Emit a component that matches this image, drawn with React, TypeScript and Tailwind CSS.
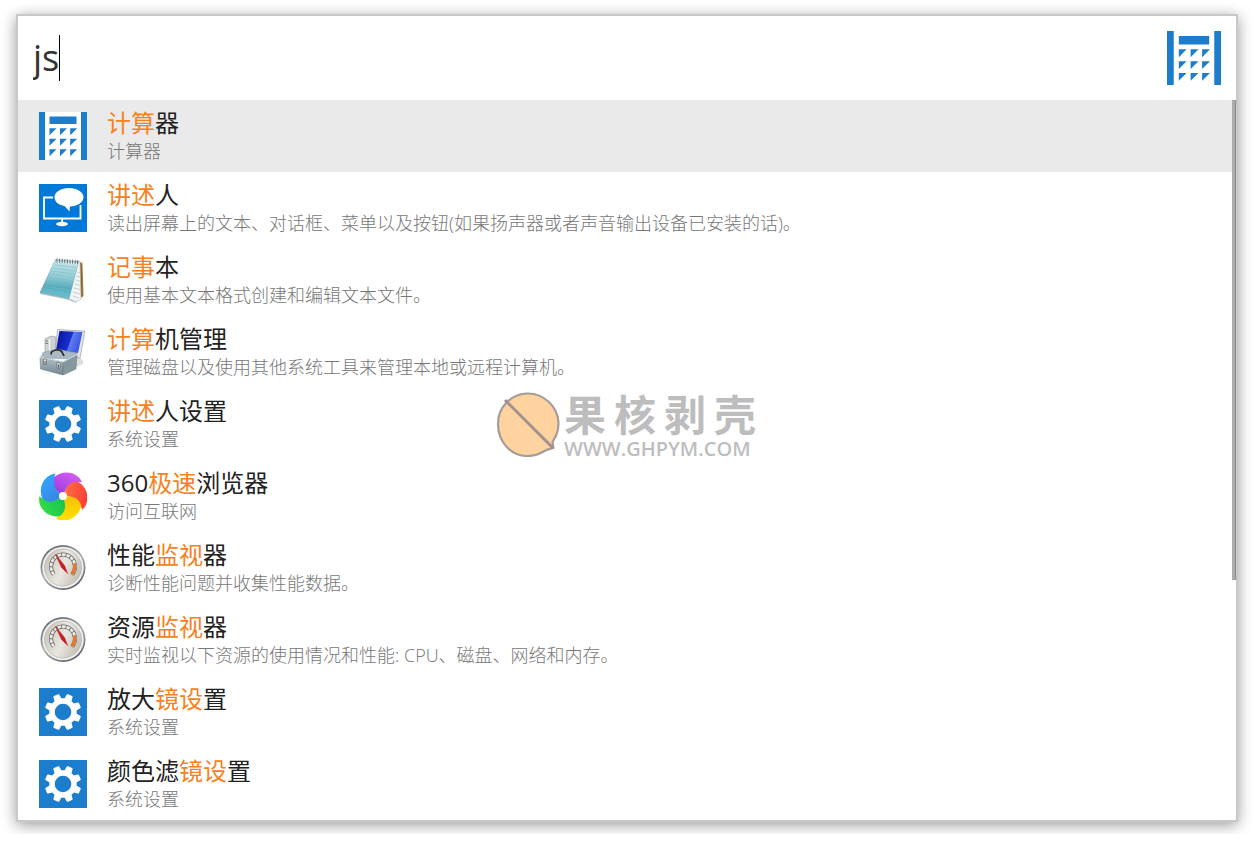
import { useState } from "react";
import type { ReactNode } from "react";

function CalculatorIcon({ className }: { className: string }) {
  return (
    <svg viewBox="0 0 48 48" className={className} aria-hidden="true">
      <rect width="48" height="48" fill="#fff" />
      <path
        fill="#1d7dcd"
        d="M0 0h6v48H0zM42 0h6v48h-6zM10.500 4.500h27V12h-27zM10.500 16.300h7l-7 7zM21 16.300h7l-7 7zM31.200 16.300h7l-7 7zM10.500 26.800h7l-7 7zM21 26.800h7l-7 7zM31.200 26.800h7l-7 7zM10.500 37.300h7l-7 7zM21 37.300h7l-7 7zM31.200 37.300h7l-7 7z"
      />
    </svg>
  );
}

function NarratorIcon() {
  return (
    <svg viewBox="0 0 48 48" className="size-12" aria-hidden="true">
      <rect width="48" height="48" fill="#0078d7" />
      <path d="M14 13.500H5v21h36.500V21" fill="none" stroke="#fff" strokeWidth="1.800" />
      <path d="M22.300 34h1.800v5h-1.800z" fill="#fff" />
      <ellipse cx="23" cy="40" rx="6" ry="2.200" fill="#fff" />
      <path
        d="M30 4c8 0 14.500 4 14.500 9.200 0 5.100-6 9-13.600 9.200L30.500 27.500 25.500 22C19.500 21 15.500 17.500 15.500 13.200 15.500 8 22 4 30 4z"
        fill="#fff"
      />
    </svg>
  );
}

function NotepadIcon() {
  return (
    <svg viewBox="0 0 48 48" className="size-12" aria-hidden="true">
      <defs>
        <linearGradient id="page" x1="0.500" y1="0" x2="0.400" y2="1">
          <stop offset="0" stopColor="#c9e6ea" />
          <stop offset="0.450" stopColor="#8fcbd5" />
          <stop offset="0.700" stopColor="#55abbd" />
          <stop offset="1" stopColor="#6cc4d3" />
        </linearGradient>
      </defs>
      <path d="M39 5l4.500 2 1 33-6 4z" fill="#a98236" />
      <path d="M42 8l1 33" stroke="#76551b" strokeWidth="0.800" />
      <path d="M37 5l4 1 1 37-4.500 3L24 41z" fill="#f1f4f5" stroke="#a3b0b4" strokeWidth="0.500" />
      <path
        d="M38 16l3 1M37 20l4 1M37 24l4 1M36 28l5 1.500M35 32l6 1.500M34 36l7 2M34 40l6 2"
        stroke="#a9bbc2"
        strokeWidth="0.600"
      />
      <path d="M1 36.500l28 5.500 9 4-1 .5-11-3.500L1 38z" fill="#b5c2c7" />
      <path d="M16.500 3.500L39.500 6 30 42.500 1 36.500z" fill="url(#page)" stroke="#6a9ca6" strokeWidth="0.500" />
      <path
        d="M16 9l21 2.500M14.500 12l21.500 3M13 15l22 3M11.500 18L34 21.500M10 21l23.500 4M8.500 24l24 4M7 27l25 4M5.500 30l25.500 4.500M4 33l26 5"
        stroke="#79bac7"
        strokeWidth="0.500"
      />
      <path d="M17 5.500L40 8" stroke="#eef2f2" strokeWidth="1.200" />
      <path
        d="M18 6.500v-4m2.600 4.200v-4m2.600 4.200v-4m2.600 4.200v-4m2.600 4.200v-4m2.600 4.200v-4m2.600 4.200v-4m2.600 4.200v-4m2.400 4.200v-4"
        stroke="#626b6e"
        strokeWidth="1"
      />
    </svg>
  );
}

function ToolboxIcon() {
  return (
    <svg viewBox="0 0 48 48" className="size-12" aria-hidden="true">
      <defs>
        <linearGradient id="screen" x1="0" y1="0.300" x2="1" y2="0.600">
          <stop offset="0" stopColor="#0614a0" />
          <stop offset="0.520" stopColor="#1a2fcf" />
          <stop offset="0.560" stopColor="#5f7cf0" />
          <stop offset="1" stopColor="#2f4fe6" />
        </linearGradient>
        <linearGradient id="box" x1="0" y1="0" x2="0" y2="1">
          <stop offset="0" stopColor="#b4c3cc" />
          <stop offset="1" stopColor="#72858f" />
        </linearGradient>
      </defs>
      <path d="M32 28l10 2 3 5-7 4-6-4z" fill="#dcdedf" />
      <path d="M6 11l6-3 5 1v18l-6 2-5-2z" fill="#cfd2d3" stroke="#7e8488" strokeWidth="0.500" />
      <path d="M10.500 11v17" stroke="#f5f6f6" strokeWidth="1.200" />
      <path d="M6.500 13h2.500M6.500 15.500h2.500" stroke="#4c555a" strokeWidth="0.700" />
      <path d="M18.500 1.500L46 3l-5 27-25-3z" fill="#e2e4e5" stroke="#8f9498" strokeWidth="0.600" />
      <path d="M20.500 3l23 1-4.500 21-22-3z" fill="url(#screen)" />
      <path d="M4 24.500L19 21l19 4.500-2 5.500L2 30z" fill="#aab9c2" stroke="#7d8d97" strokeWidth="0.500" />
      <path d="M1 29l23 5v13L1.500 41z" fill="url(#box)" stroke="#687a85" strokeWidth="0.500" />
      <path d="M24 34l14-7-1 14-13 6z" fill="#85979f" stroke="#667781" strokeWidth="0.500" />
      <path d="M1 29l23 5 14-7.500" fill="none" stroke="#d6dfe4" strokeWidth="1" />
      <path d="M12 26.500c0-3 2-4 5-4.500 3-.5 5 0 6 2 .5 1.500 1.500 2.500 2 4" fill="none" stroke="#2b2e30" strokeWidth="1.700" />
      <path d="M4.500 31h3v5.500h-3zM18 34.500h3v5.500h-3z" fill="#e5e9eb" stroke="#4d5558" strokeWidth="0.600" />
      <path d="M6 33v3M19.500 36.500v3" stroke="#5c4a38" strokeWidth="1" />
    </svg>
  );
}

const GEAR_TEETH = [22.5, 67.5, 112.5, 157.5, 202.5, 247.5, 292.5, 337.5];

function GearIcon() {
  return (
    <svg viewBox="0 0 48 48" className="size-12" aria-hidden="true">
      <rect width="48" height="48" fill="#1d7dcd" />
      <circle cx="24" cy="24" r="11" fill="none" stroke="#fff" strokeWidth="5.400" />
      {GEAR_TEETH.map((angle) => (
        <path
          key={angle}
          transform={`rotate(${angle} 24 24)`}
          d="M20 13l.8-6.300q.2-.9 1-.9h4.400q.8 0 1 .9L28 13z"
          fill="#fff"
        />
      ))}
    </svg>
  );
}

const BLADES = [
  { angle: 0, id: "blade-purple", from: "#8f37e0", to: "#d75cf2" },
  { angle: 72, id: "blade-red", from: "#ff7a45", to: "#fb3a36" },
  { angle: 144, id: "blade-yellow", from: "#f3b800", to: "#ffe300" },
  { angle: 216, id: "blade-green", from: "#0fbf55", to: "#33dd44" },
  { angle: 288, id: "blade-blue", from: "#3b7ce0", to: "#33a5f8" },
];

function BrowserIcon() {
  return (
    <svg viewBox="0 0 48 48" className="size-12" aria-hidden="true">
      <defs>
        {BLADES.map((blade) => (
          <linearGradient key={blade.id} id={blade.id} x1="0" y1="1" x2="0.700" y2="0">
            <stop offset="0" stopColor={blade.from} />
            <stop offset="1" stopColor={blade.to} />
          </linearGradient>
        ))}
      </defs>
      {BLADES.map((blade) => (
        <path
          key={blade.id}
          transform={`rotate(${blade.angle} 24 24)`}
          d="M24 24C14.500 17.700 12.500 11.500 15 5.500C23-2.500 38-1 43 10C34 9.500 27 13 24 24z"
          fill={`url(#${blade.id})`}
        />
      ))}
      <circle cx="24" cy="24" r="4" fill="#fff" />
    </svg>
  );
}

function GaugeIcon() {
  return (
    <svg viewBox="0 0 48 48" className="size-12" aria-hidden="true">
      <defs>
        <linearGradient id="rim" x1="0.200" y1="0" x2="0.800" y2="1">
          <stop offset="0" stopColor="#5a6368" />
          <stop offset="0.500" stopColor="#a9adaf" />
          <stop offset="1" stopColor="#4f575c" />
        </linearGradient>
        <linearGradient id="face" x1="0" y1="0.300" x2="1" y2="0.700">
          <stop offset="0" stopColor="#c8c4bd" />
          <stop offset="0.500" stopColor="#e9e6df" />
          <stop offset="1" stopColor="#c1bcb3" />
        </linearGradient>
      </defs>
      <circle cx="24" cy="23.500" r="22.500" fill="url(#rim)" />
      <circle cx="24" cy="23.500" r="20.800" fill="#ededec" />
      <circle cx="24" cy="23.500" r="18.500" fill="url(#face)" stroke="#b2b0ab" strokeWidth="0.600" />
      <path d="M15 30.500A12 12 0 1 1 33 30.500" fill="none" stroke="#5e6265" strokeWidth="4" />
      <path d="M15 30.500A12 12 0 1 1 33 30.500" fill="none" stroke="#eeeae2" strokeWidth="2.800" strokeDasharray="3.600 .8" />
      <path d="M35.500 19.500a12 12 0 0 1-3 11" fill="none" stroke="#e5792a" strokeWidth="3" />
      <path d="M16.500 10.500L25.500 21.500l3 8-6-6z" fill="#bf1f22" stroke="#c92427" strokeWidth="0.600" />
    </svg>
  );
}

type Segment = { text: string; match?: boolean };

type Result = {
  id: string;
  icon: ReactNode;
  title: Segment[];
  description: string;
};

const RESULTS: Result[] = [
  {
    id: "calculator",
    icon: <CalculatorIcon className="size-12" />,
    title: [{ text: "计算", match: true }, { text: "器" }],
    description: "计算器",
  },
  {
    id: "narrator",
    icon: <NarratorIcon />,
    title: [{ text: "讲述", match: true }, { text: "人" }],
    description: "读出屏幕上的文本、对话框、菜单以及按钮(如果扬声器或者声音输出设备已安装的话)。",
  },
  {
    id: "notepad",
    icon: <NotepadIcon />,
    title: [{ text: "记事", match: true }, { text: "本" }],
    description: "使用基本文本格式创建和编辑文本文件。",
  },
  {
    id: "computer-management",
    icon: <ToolboxIcon />,
    title: [{ text: "计算", match: true }, { text: "机管理" }],
    description: "管理磁盘以及使用其他系统工具来管理本地或远程计算机。",
  },
  {
    id: "narrator-settings",
    icon: <GearIcon />,
    title: [{ text: "讲述", match: true }, { text: "人设置" }],
    description: "系统设置",
  },
  {
    id: "browser",
    icon: <BrowserIcon />,
    title: [{ text: "360" }, { text: "极速", match: true }, { text: "浏览器" }],
    description: "访问互联网",
  },
  {
    id: "performance-monitor",
    icon: <GaugeIcon />,
    title: [{ text: "性能" }, { text: "监视", match: true }, { text: "器" }],
    description: "诊断性能问题并收集性能数据。",
  },
  {
    id: "resource-monitor",
    icon: <GaugeIcon />,
    title: [{ text: "资源" }, { text: "监视", match: true }, { text: "器" }],
    description: "实时监视以下资源的使用情况和性能: CPU、磁盘、网络和内存。",
  },
  {
    id: "magnifier-settings",
    icon: <GearIcon />,
    title: [{ text: "放大" }, { text: "镜设", match: true }, { text: "置" }],
    description: "系统设置",
  },
  {
    id: "color-filter-settings",
    icon: <GearIcon />,
    title: [{ text: "颜色滤" }, { text: "镜设", match: true }, { text: "置" }],
    description: "系统设置",
  },
];

function ResultRow({
  result,
  selected,
  onSelect,
}: {
  result: Result;
  selected: boolean;
  onSelect: () => void;
}) {
  return (
    <li>
      <button
        type="button"
        onClick={onSelect}
        className={
          selected
            ? "flex w-full items-center gap-5 bg-[#eaeaea] py-[7px] pl-[21px] text-left"
            : "flex w-full items-center gap-5 py-[7px] pl-[21px] text-left"
        }
      >
        <span className="shrink-0">{result.icon}</span>
        <span className="flex min-w-0 flex-col pb-0.5">
          <span className="text-[24px] leading-8 text-[#222222]">
            {result.title.map((segment) => (
              <span key={segment.text} className={segment.match ? "text-[#f5821f]" : ""}>
                {segment.text}
              </span>
            ))}
          </span>
          <span className="truncate text-[18px] leading-6 font-light text-[#777777]">
            {result.description}
          </span>
        </span>
      </button>
    </li>
  );
}

function Watermark() {
  return (
    <div className="pointer-events-none absolute top-[375px] left-[478px] flex items-start gap-1">
      <svg viewBox="0 0 64 66" className="h-[66px] w-16" aria-hidden="true">
        <path
          d="M31 2.500C48 2 62 16 62.500 32c0 9-3 14-6 19l1 6c-4 1-6 1-9 3-5 3-11 5-17 5C14 65 2 50 2 33S15 3 31 2.500z"
          fill="#ffd39f"
          stroke="#a79c98"
          strokeWidth="2.200"
        />
        <path d="M9 9l48 48" stroke="#a0928e" strokeWidth="3" />
      </svg>
      <div className="flex flex-col pt-0.5 text-[#bdbdbd]">
        <span className="flex gap-2 text-[42px] leading-[44px] font-bold">
          <span>果</span>
          <span>核</span>
          <span>剥</span>
          <span>壳</span>
        </span>
        <span className="text-[20px] leading-6 font-semibold">WWW.GHPYM.COM</span>
      </div>
    </div>
  );
}

export default function App() {
  const [query, setQuery] = useState("js");
  const [selected, setSelected] = useState("calculator");

  return (
    <div className="overflow-hidden bg-white px-4 pt-3.5 pb-3 font-['Open_Sans','Noto_Sans_CJK_SC',sans-serif]">
      <main className="relative border-2 border-[#c8c8c8] bg-white shadow-[0_3px_14px_rgba(0,0,0,0.4)]">
        <label className="flex h-[84px] items-center justify-between pr-[15px] pl-[15px]">
          <span className="flex items-center">
            <input
              type="text"
              aria-label="搜索"
              value={query}
              onChange={(event) => setQuery(event.target.value)}
              className="[field-sizing:content] text-[36px] leading-[46px] text-[#333333] caret-transparent outline-none"
            />
            <span className="h-[46px] w-px bg-black" />
          </span>
          <CalculatorIcon className="size-[54px]" />
        </label>
        <div className="flex items-start">
          <ul className="min-w-0 flex-1">
            {RESULTS.map((result) => (
              <ResultRow
                key={result.id}
                result={result}
                selected={result.id === selected}
                onSelect={() => setSelected(result.id)}
              />
            ))}
          </ul>
          <div className="h-[480px] w-1 border-r border-[#8c8c8c] bg-[#acacac]" />
        </div>
        <Watermark />
      </main>
    </div>
  );
}
